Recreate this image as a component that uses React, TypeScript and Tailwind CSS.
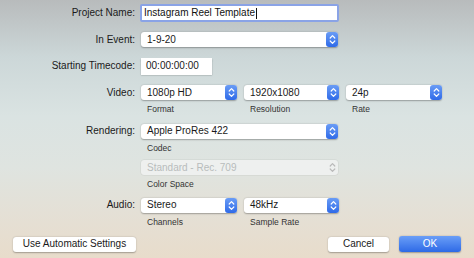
import React from "react";

const font = { fontFamily: '"Liberation Sans", Arial, sans-serif' };

function Stepper({ disabled }: { disabled?: boolean }) {
  return (
    <div
      className={
        disabled
          ? "w-[12px] h-full flex items-center justify-center rounded-r-[3px]"
          : "w-[12px] h-full flex items-center justify-center rounded-[3px] bg-gradient-to-b from-[#6a9cf5] to-[#2f6ae8]"
      }
    >
      <svg width="7" height="11" viewBox="0 0 7 11">
        <path
          d="M1.2 4 L3.5 1.7 L5.8 4 M1.2 7 L3.5 9.3 L5.8 7"
          fill="none"
          stroke={disabled ? "#b9b9b9" : "#ffffff"}
          strokeWidth="1.2"
          strokeLinecap="round"
          strokeLinejoin="round"
        />
      </svg>
    </div>
  );
}

function Popup({
  value,
  width,
  disabled,
}: {
  value: string;
  width: string;
  disabled?: boolean;
}) {
  return (
    <div
      className={
        (disabled
          ? "bg-[#eef0ef] text-[#b8bcbc] shadow-[0_0_0_0.5px_rgba(0,0,0,0.08)] "
          : "bg-white text-[#1a1a1a] shadow-[0_0.5px_1.5px_rgba(0,0,0,0.3)] ") +
        "h-[15px] rounded-[3px] flex items-center justify-between " +
        width
      }
    >
      <span className="pl-[6px] text-[10px] leading-none">{value}</span>
      <Stepper disabled={disabled} />
    </div>
  );
}

function Label({ children }: { children: React.ReactNode }) {
  return (
    <div className="w-[140px] shrink-0 text-right pr-[5px] text-[10px] text-[#1a1a1a] leading-none">
      {children}
    </div>
  );
}

function Sub({ children, className }: { children: React.ReactNode; className?: string }) {
  return (
    <div className={"text-[8.5px] text-[#333] leading-none pl-[6px] " + (className || "")}>
      {children}
    </div>
  );
}

export default function App() {
  return (
    <div
      style={font}
      className="w-[474px] h-[258px] overflow-hidden relative bg-[linear-gradient(to_bottom,#b8bbbc_0%,#ccd7d8_22%,#dae3e2_45%,#dfe4e0_65%,#e4e0d6_82%,#e8dccb_100%)] pt-[4px]"
    >
      {/* Project Name */}
      <div className="flex items-center h-[18px]">
        <Label>Project Name:</Label>
        <div className="w-[199px] h-[18px] bg-white border-[2px] border-[#8aa3e6] rounded-[2px] flex items-center pl-[2px] text-[10px] text-[#111] leading-none">
          Instagram Reel Template
          <span className="inline-block w-px h-[11px] bg-[#111] ml-px" />
        </div>
      </div>

      {/* In Event */}
      <div className="flex items-center mt-[9px] h-[17px]">
        <Label>In Event:</Label>
        <div className="ml-px">
          <Popup value="1-9-20" width="w-[197px]" />
        </div>
      </div>

      {/* Starting Timecode */}
      <div className="flex items-center mt-[9px] h-[18px]">
        <Label>Starting Timecode:</Label>
        <div className="ml-px w-[71px] h-[17px] bg-white shadow-[0_0.5px_1.5px_rgba(0,0,0,0.3)] flex items-center pl-[5px] text-[10px] text-[#1a1a1a] leading-none">
          00:00:00:00
        </div>
      </div>

      {/* Video */}
      <div className="flex mt-[10px]">
        <Label>
          <div className="h-[15px] flex items-center justify-end">Video:</div>
        </Label>
        <div className="ml-px flex gap-[7px]">
          <div className="flex flex-col gap-[5px]">
            <Popup value="1080p HD" width="w-[96px]" />
            <Sub>Format</Sub>
          </div>
          <div className="flex flex-col gap-[5px]">
            <Popup value="1920x1080" width="w-[95px]" />
            <Sub>Resolution</Sub>
          </div>
          <div className="flex flex-col gap-[5px]">
            <Popup value="24p" width="w-[96px]" />
            <Sub>Rate</Sub>
          </div>
        </div>
      </div>

      {/* Rendering */}
      <div className="flex mt-[10px]">
        <Label>
          <div className="h-[15px] flex items-center justify-end">Rendering:</div>
        </Label>
        <div className="ml-px flex flex-col gap-[5px]">
          <Popup value="Apple ProRes 422" width="w-[197px]" />
          <Sub>Codec</Sub>
        </div>
      </div>

      {/* Color Space */}
      <div className="flex mt-[8px]">
        <Label>{""}</Label>
        <div className="ml-px flex flex-col gap-[5px]">
          <Popup value="Standard - Rec. 709" width="w-[197px]" disabled />
          <Sub>Color Space</Sub>
        </div>
      </div>

      {/* Audio */}
      <div className="flex mt-[9px]">
        <Label>
          <div className="h-[15px] flex items-center justify-end">Audio:</div>
        </Label>
        <div className="ml-px flex gap-[7px]">
          <div className="flex flex-col gap-[5px]">
            <Popup value="Stereo" width="w-[96px]" />
            <Sub>Channels</Sub>
          </div>
          <div className="flex flex-col gap-[5px]">
            <Popup value="48kHz" width="w-[95px]" />
            <Sub>Sample Rate</Sub>
          </div>
        </div>
      </div>

      {/* Buttons */}
      <div className="flex items-center mt-[10px] px-[13px]">
        <div className="w-[123px] h-[15px] bg-white rounded-[3px] shadow-[0_0.5px_1.5px_rgba(0,0,0,0.3)] flex items-center justify-center text-[10px] text-[#1a1a1a] leading-none">
          Use Automatic Settings
        </div>
        <div className="flex-1" />
        <div className="w-[61px] h-[15px] bg-white rounded-[3px] shadow-[0_0.5px_1.5px_rgba(0,0,0,0.3)] flex items-center justify-center text-[10px] text-[#1a1a1a] leading-none">
          Cancel
        </div>
        <div className="ml-[10px] w-[62px] h-[16px] rounded-[3px] bg-gradient-to-b from-[#6a9ef7] to-[#2e69e6] shadow-[0_0.5px_1.5px_rgba(0,0,0,0.3)] flex items-center justify-center text-[10px] text-white leading-none">
          OK
        </div>
      </div>
    </div>
  );
}
